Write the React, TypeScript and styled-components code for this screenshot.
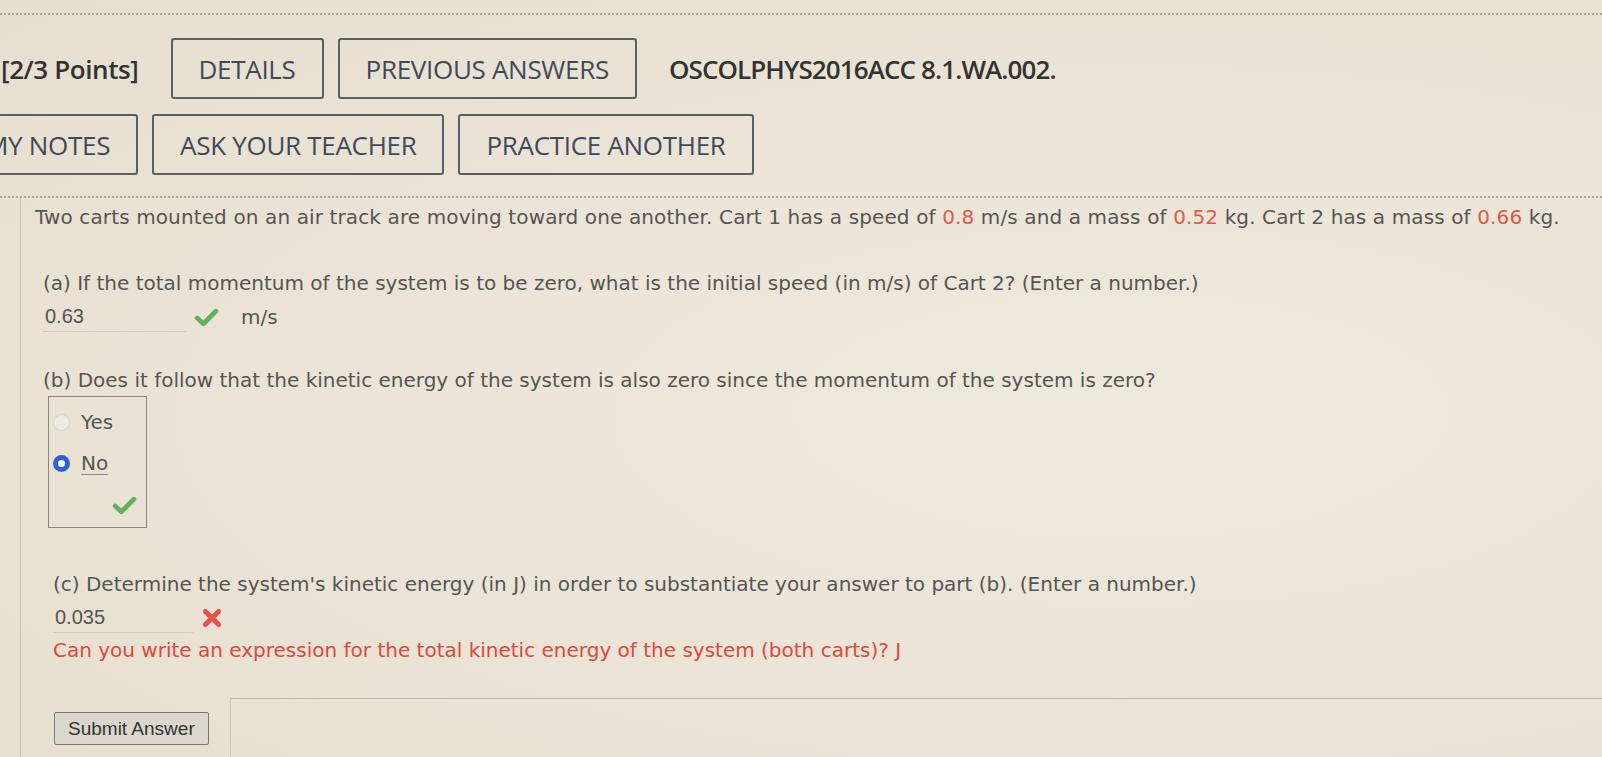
import React from 'react';
import styled, { createGlobalStyle } from 'styled-components';

const GlobalStyle = createGlobalStyle`
  html, body {
    margin: 0;
    padding: 0;
    background: #ebe4d6;
  }
  body {
    overflow: hidden;
  }
`;

const Page = styled.div`
  width: 1602px;
  height: 757px;
  overflow: hidden;
  box-sizing: border-box;
  padding-top: 13px;
  background: radial-gradient(ellipse at 70% 55%, #efe9dc 0%, #ebe4d6 55%, #e6dece 100%);
  color: #555;
`;

const DottedRule = styled.div`
  border-top: 2px dotted #aaa59c;
`;

const Header = styled.div`
  display: flex;
  flex-direction: column;
  gap: 15px;
  padding: 23px 0 21px;
  font-family: "Open Sans", "Liberation Sans", sans-serif;
`;

const HeaderRow = styled.div<{ $shift?: number }>`
  display: flex;
  align-items: center;
  gap: 14px;
  margin-left: ${p => p.$shift ?? 0}px;
`;

const Points = styled.span`
  font-size: 26px;
  font-weight: 600;
  color: #333;
  margin: 0 18px 0 1px;
  letter-spacing: -0.4px;
`;

const Title = styled.span`
  font-size: 26px;
  font-weight: 600;
  color: #333;
  margin-left: 18px;
  letter-spacing: -0.9px;
`;

const HeadButton = styled.button`
  height: 61px;
  box-sizing: border-box;
  padding: 0 26px;
  border: 2px solid #5b5e63;
  border-radius: 3px;
  background: transparent;
  font-family: "Open Sans", "Liberation Sans", sans-serif;
  font-size: 26px;
  color: #3d4a5c;
  letter-spacing: -0.3px;
  white-space: nowrap;
`;

const Question = styled.div`
  margin-left: 20px;
  border-left: 1px solid #c8c2b6;
  padding: 6px 0 0 22px;
  font-family: "DejaVu Sans", Verdana, sans-serif;
  font-size: 20px;
  color: #555;
  height: 600px;
`;

const Intro = styled.p`
  margin: 0 0 0 -8px;
  line-height: 26px;
  letter-spacing: 0.12px;
  white-space: nowrap;
`;

const Num = styled.span`
  color: #e6564c;
`;

const Part = styled.div<{ $indent?: number; $top: number }>`
  margin-left: ${p => p.$indent ?? 0}px;
  margin-top: ${p => p.$top}px;
`;

const Prompt = styled.div`
  line-height: 26px;
  white-space: nowrap;
`;

const AnswerRow = styled.div`
  display: flex;
  align-items: center;
  margin-top: 6px;
  height: 30px;
`;

const Field = styled.div<{ $width: number }>`
  width: ${p => p.$width}px;
  box-sizing: border-box;
  padding: 0 2px;
  border-bottom: 1px solid #d2ccc0;
  font-family: "Liberation Sans", Arial, sans-serif;
  font-size: 20px;
  line-height: 29px;
  color: #555;
`;

const Mark = styled.span`
  display: inline-flex;
  margin-left: 8px;
`;

const Unit = styled.span`
  margin-left: 22px;
`;

const ChoiceBox = styled.div`
  margin: 3px 0 0 5px;
  width: 99px;
  height: 132px;
  box-sizing: border-box;
  border: 1px solid #8a8780;
  padding: 12px 0 0 4px;
  display: flex;
  flex-direction: column;
  gap: 17px;
`;

const Choice = styled.label`
  display: flex;
  align-items: center;
  gap: 11px;
  line-height: 26px;
`;

const Radio = styled.span<{ $checked?: boolean }>`
  width: 17px;
  height: 17px;
  border-radius: 50%;
  box-sizing: border-box;
  border: ${p => (p.$checked ? '5px solid #2a64d6' : '1px solid #d8d3ca')};
  background: ${p => (p.$checked ? '#fff' : '#eeeae2')};
`;

const Picked = styled.span`
  border-bottom: 1px solid #888;
  line-height: 22px;
`;

const BoxMark = styled.span`
  align-self: flex-end;
  margin: 4px 9px 0 0;
`;

const Hint = styled.div`
  margin-top: 4px;
  color: #e0473e;
  line-height: 26px;
  white-space: nowrap;
`;

const SubmitRow = styled.div`
  display: flex;
  align-items: flex-start;
  margin: 35px 0 0 11px;
`;

const Submit = styled.button`
  margin-top: 14px;
  height: 33px;
  padding: 0 13px;
  border: 1px solid #7a7873;
  border-radius: 2px;
  background: #dcd7ce;
  font-family: "Liberation Sans", Arial, sans-serif;
  font-size: 19px;
  color: #333;
`;

const WorkArea = styled.div`
  flex: 1;
  margin-left: 21px;
  height: 120px;
  border-top: 1px solid #bdb8ae;
  border-left: 1px solid #cfc9be;
`;

const Check = () => (
  <svg width="25" height="19" viewBox="0 0 24 18">
    <path d="M3 9.5 L9 15 L21 3" fill="none" stroke="#5fb15a" strokeWidth="4.5" strokeLinecap="round" strokeLinejoin="round" />
  </svg>
);

const Cross = () => (
  <svg width="22" height="22" viewBox="0 0 20 20">
    <path d="M4 4 L16 16 M16 4 L4 16" fill="none" stroke="#e8524a" strokeWidth="4.5" strokeLinecap="round" />
  </svg>
);

export default function App() {
  return (
    <Page>
      <GlobalStyle />
      <DottedRule />
      <Header>
        <HeaderRow>
          <Points>[2/3 Points]</Points>
          <HeadButton>DETAILS</HeadButton>
          <HeadButton>PREVIOUS ANSWERS</HeadButton>
          <Title>OSCOLPHYS2016ACC 8.1.WA.002.</Title>
        </HeaderRow>
        <HeaderRow $shift={-43}>
          <HeadButton>MY NOTES</HeadButton>
          <HeadButton>ASK YOUR TEACHER</HeadButton>
          <HeadButton>PRACTICE ANOTHER</HeadButton>
        </HeaderRow>
      </Header>
      <DottedRule />
      <Question>
        <Intro>
          Two carts mounted on an air track are moving toward one another. Cart 1 has a speed of <Num>0.8</Num> m/s and a
          mass of <Num>0.52</Num> kg. Cart 2 has a mass of <Num>0.66</Num> kg.
        </Intro>

        <Part $top={40}>
          <Prompt>(a) If the total momentum of the system is to be zero, what is the initial speed (in m/s) of Cart 2? (Enter a number.)</Prompt>
          <AnswerRow>
            <Field $width={143}>0.63</Field>
            <Mark><Check /></Mark>
            <Unit>m/s</Unit>
          </AnswerRow>
        </Part>

        <Part $top={35}>
          <Prompt>(b) Does it follow that the kinetic energy of the system is also zero since the momentum of the system is zero?</Prompt>
          <ChoiceBox>
            <Choice>
              <Radio />
              <span>Yes</span>
            </Choice>
            <Choice>
              <Radio $checked />
              <Picked>No</Picked>
            </Choice>
            <BoxMark><Check /></BoxMark>
          </ChoiceBox>
        </Part>

        <Part $indent={10} $top={43}>
          <Prompt>(c) Determine the system's kinetic energy (in J) in order to substantiate your answer to part (b). (Enter a number.)</Prompt>
          <AnswerRow>
            <Field $width={140}>0.035</Field>
            <Mark><Cross /></Mark>
          </AnswerRow>
          <Hint>Can you write an expression for the total kinetic energy of the system (both carts)? J</Hint>
        </Part>

        <SubmitRow>
          <Submit>Submit Answer</Submit>
          <WorkArea />
        </SubmitRow>
      </Question>
    </Page>
  );
}
